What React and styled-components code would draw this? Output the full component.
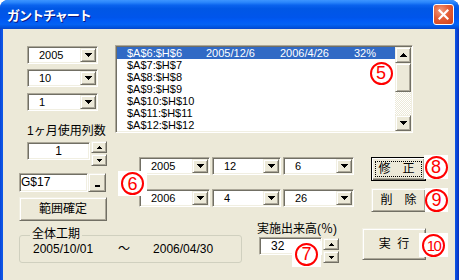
import styled, { createGlobalStyle, css } from "styled-components";

const FACE = "#ece9d8";
const CJK = `"Liberation Sans", "Noto Sans CJK JP", sans-serif`;

const GlobalStyle = createGlobalStyle`
  html, body {
    margin: 0;
    padding: 0;
    background: #ffffff;
  }
  body {
    font-family: ${CJK};
    font-size: 12px;
    color: #000000;
  }
  * {
    box-sizing: border-box;
  }
`;

const sunken = css`
  border: 1px solid;
  border-color: #aca899 #ffffff #ffffff #aca899;
  padding: 1px;
  box-shadow: inset 1px 1px #716f64, inset -1px -1px #f1efe2;
  background: #ffffff;
`;

const raised = css`
  border: 1px solid;
  border-color: #f1efe2 #716f64 #716f64 #f1efe2;
  box-shadow: inset 1px 1px #ffffff, inset -1px -1px #aca899;
  background: ${FACE};
`;

const Window = styled.div`
  position: relative;
  width: 459px;
  height: 280px;
  display: flex;
  flex-direction: column;
  background: linear-gradient(to right, #0a44d6, #0d56e6 2px, #0d56e6 455px, #0a44d6 457px, #0831b9);
  border-radius: 8px 8px 0 0;
  overflow: hidden;
`;

const TitleBar = styled.div`
  height: 29px;
  flex-shrink: 0;
  display: flex;
  align-items: center;
  justify-content: space-between;
  padding: 0 5px 0 7px;
  background: linear-gradient(
    to bottom,
    #3d95ff 0%,
    #2a86fb 8%,
    #0a63ee 18%,
    #0057e5 30%,
    #0055eb 60%,
    #005bf5 72%,
    #0462f4 84%,
    #0053de 94%,
    #0846c9 100%
  );
`;

const TitleText = styled.span`
  color: #ffffff;
  font-family: "Noto Sans CJK JP", sans-serif;
  font-weight: bold;
  font-size: 13px;
  letter-spacing: -1px;
  text-shadow: 1px 1px #0a1883;
`;

const CloseBtn = styled.div`
  width: 21px;
  height: 21px;
  border: 1px solid #ffffff;
  border-radius: 3px;
  background: radial-gradient(circle at 35% 30%, #f39b7c 0%, #e35d36 45%, #cf3f17 100%);
  display: flex;
  align-items: center;
  justify-content: center;
`;

const Client = styled.div`
  flex: 1;
  margin: 0 4px 0 3px;
  background: ${FACE};
  padding: 16px 0 0 16px;
  display: flex;
  flex-direction: column;
`;

const TopSection = styled.div`
  display: flex;
  align-items: flex-start;
  height: 176px;
`;

const LeftCol = styled.div`
  width: 88px;
  padding-top: 1px;
  display: flex;
  flex-direction: column;
  align-items: flex-start;
`;

const Combo = styled.div`
  ${sunken}
  width: ${(p) => p.$w}px;
  height: 18px;
  display: flex;
  margin-top: ${(p) => p.$mt || 0}px;
  margin-left: ${(p) => p.$ml || 0}px;
`;

const ComboValue = styled.span`
  flex: 1;
  padding-left: 10px;
  font-size: 11px;
  line-height: 14px;
`;

const DropBtn = styled.span`
  ${raised}
  width: 16px;
  display: flex;
  align-items: center;
  justify-content: center;
`;

const Label = styled.div`
  font-size: 12px;
  line-height: 14px;
  white-space: nowrap;
  margin-top: ${(p) => p.$mt || 0}px;
  margin-left: ${(p) => p.$ml || 0}px;
`;

const SpinRow = styled.div`
  display: flex;
  align-items: flex-start;
  margin-top: ${(p) => p.$mt || 0}px;
  margin-left: ${(p) => p.$ml || 0}px;
`;

const Edit = styled.div`
  ${sunken}
  width: ${(p) => p.$w}px;
  height: ${(p) => p.$h}px;
  margin-top: ${(p) => p.$mt || 0}px;
  padding-left: ${(p) => p.$pl || 1}px;
  font-size: 12px;
  line-height: ${(p) => p.$h - 4}px;
  text-align: ${(p) => p.$align || "left"};
`;

const SpinCol = styled.div`
  width: 16px;
  margin-left: 1px;
  display: flex;
  flex-direction: column;
  gap: 1px;
  margin-top: ${(p) => p.$mt || 0}px;
`;

const SpinBtn = styled.div`
  ${raised}
  height: 12px;
  display: flex;
  align-items: center;
  justify-content: center;
`;

const RefButton = styled.div`
  ${raised}
  width: 18px;
  height: 19px;
  display: flex;
  align-items: flex-end;
  justify-content: center;
  padding-bottom: 4px;
`;

const RefBar = styled.span`
  width: 5px;
  height: 2px;
  background: #000000;
`;

const PushButton = styled.div`
  ${raised}
  width: ${(p) => p.$w}px;
  height: ${(p) => p.$h}px;
  margin-top: ${(p) => p.$mt || 0}px;
  margin-left: ${(p) => p.$ml || 0}px;
  display: flex;
  align-items: center;
  justify-content: center;
  font-size: 12px;
  line-height: 14px;
  white-space: pre;
  flex-shrink: 0;
  ${(p) =>
    p.$default &&
    css`
      border-color: #000000;
      box-shadow: inset 1px 1px #ffffff, inset -1px -1px #716f64, inset -2px -2px #aca899;
      padding: 3px;
      align-items: stretch;
    `}
`;

const FocusRing = styled.span`
  flex: 1;
  border: 1px dotted #000000;
  display: flex;
  align-items: center;
  justify-content: center;
  padding-right: 4px;
`;

const RightArea = styled.div`
  margin-left: 8px;
  display: flex;
  flex-direction: column;
`;

const ListBox = styled.div`
  ${sunken}
  width: 298px;
  height: 88px;
  display: flex;
`;

const ListRows = styled.div`
  flex: 1;
  display: flex;
  flex-direction: column;
`;

const ListRow = styled.div`
  height: 12px;
  display: grid;
  grid-template-columns: 79px 74px 74px 1fr;
  padding-left: 10px;
  font-size: 11px;
  line-height: 12px;
  white-space: nowrap;
  background: ${(p) => (p.$selected ? "#316ac5" : "transparent")};
  color: ${(p) => (p.$selected ? "#ffffff" : "#000000")};
`;

const ScrollBar = styled.div`
  width: 16px;
  display: flex;
  flex-direction: column;
`;

const ScrollBtn = styled.div`
  ${raised}
  height: 16px;
  display: flex;
  align-items: center;
  justify-content: center;
`;

const Thumb = styled.div`
  ${raised}
  height: 29px;
`;

const Track = styled.div`
  flex: 1;
  background: repeating-conic-gradient(#ffffff 0 25%, ${FACE} 0 50%) 0 0 / 2px 2px;
`;

const ControlsRow = styled.div`
  display: flex;
  align-items: flex-start;
  margin-top: 24px;
`;

const DateGrid = styled.div`
  margin-left: 24px;
  display: grid;
  grid-template-columns: 71px 69px 71px;
  column-gap: 2px;
  row-gap: 14px;
`;

const ButtonCol = styled.div`
  margin-left: 17px;
  display: flex;
  flex-direction: column;
`;

const BottomSection = styled.div`
  display: flex;
  align-items: flex-start;
`;

const GroupBox = styled.div`
  position: relative;
  width: 223px;
  height: 28px;
  margin-top: 14px;
  border: 1px solid #d0d0bf;
  border-radius: 3px;
  display: flex;
  align-items: center;
  padding-left: 13px;
  font-size: 12px;
  line-height: 14px;
`;

const GroupLegend = styled.span`
  position: absolute;
  top: -9px;
  left: 10px;
  padding: 0 2px;
  background: ${FACE};
`;

const DateText = styled.span`
  margin-left: ${(p) => p.$ml || 0}px;
`;

const ProgressCol = styled.div`
  margin-left: 15px;
  margin-top: 1px;
  display: flex;
  flex-direction: column;
  align-items: flex-start;
`;

const Marker = styled.div`
  position: absolute;
  left: ${(p) => p.$x}px;
  top: ${(p) => p.$y}px;
  width: ${(p) => p.$w}px;
  height: ${(p) => p.$h}px;
  background: #ffffff;
  display: flex;
  align-items: center;
  justify-content: center;
`;

const Ring = styled.span`
  width: 23px;
  height: 23px;
  border: 2px solid #ff0000;
  border-radius: 50%;
  display: flex;
  align-items: center;
  justify-content: center;
  color: #ff0000;
  font-family: "Liberation Sans", sans-serif;
  font-size: ${(p) => (p.$narrow ? 15 : 18)}px;
  letter-spacing: ${(p) => (p.$narrow ? -1.5 : 0)}px;
  line-height: 1;
`;

const Triangle = ({ dir = "down", w = 7 }) => {
  const h = Math.ceil(w / 2);
  const pts = dir === "down" ? `0,0 ${w},0 ${w / 2},${h}` : `0,${h} ${w},${h} ${w / 2},0`;
  return (
    <svg width={w} height={h} viewBox={`0 0 ${w} ${h}`} shapeRendering="crispEdges">
      <polygon points={pts} fill="#000000" />
    </svg>
  );
};

const ComboBox = ({ value, w, mt, ml }) => (
  <Combo $w={w} $mt={mt} $ml={ml}>
    <ComboValue>{value}</ComboValue>
    <DropBtn>
      <Triangle dir="down" />
    </DropBtn>
  </Combo>
);

const Spinner = () => (
  <>
    <SpinBtn>
      <Triangle dir="up" w={5} />
    </SpinBtn>
    <SpinBtn>
      <Triangle dir="down" w={5} />
    </SpinBtn>
  </>
);

const rows = [
  ["$A$6:$H$6", "2005/12/6", "2006/4/26", "32%"],
  ["$A$7:$H$7"],
  ["$A$8:$H$8"],
  ["$A$9:$H$9"],
  ["$A$10:$H$10"],
  ["$A$11:$H$11"],
  ["$A$12:$H$12"],
];

const markers = [
  { n: "5", x: 369, y: 61, w: 24, h: 24 },
  { n: "6", x: 118, y: 171, w: 29, h: 25 },
  { n: "7", x: 292, y: 241, w: 29, h: 26 },
  { n: "8", x: 424, y: 155, w: 24, h: 24 },
  { n: "9", x: 425, y: 188, w: 23, h: 24 },
  { n: "10", x: 419, y: 233, w: 29, h: 24 },
];

export default function App() {
  return (
    <>
      <GlobalStyle />
      <Window>
        <TitleBar>
          <TitleText>ガントチャート</TitleText>
          <CloseBtn>
            <svg width="11" height="11" viewBox="0 0 11 11">
              <path d="M1.5 1.5 L9.5 9.5 M9.5 1.5 L1.5 9.5" stroke="#ffffff" strokeWidth="2.2" strokeLinecap="square" />
            </svg>
          </CloseBtn>
        </TitleBar>

        <Client>
          <TopSection>
            <LeftCol>
              <ComboBox value="2005" w={71} ml={8} />
              <ComboBox value="10" w={71} ml={8} mt={5} />
              <ComboBox value="1" w={71} ml={8} mt={6} />
              <Label $mt={13} $ml={8}>1ヶ月使用列数</Label>
              <SpinRow $mt={3} $ml={8}>
                <Edit $w={63} $h={18} $mt={1} $align="center">1</Edit>
                <SpinCol>
                  <Spinner />
                </SpinCol>
              </SpinRow>
              <SpinRow $mt={7}>
                <Edit $w={69} $h={19}>G$17</Edit>
                <RefButton>
                  <RefBar />
                </RefButton>
              </SpinRow>
              <PushButton $w={88} $h={24} $mt={5}>範囲確定</PushButton>
            </LeftCol>

            <RightArea>
              <ListBox>
                <ListRows>
                  {rows.map((r, i) => (
                    <ListRow key={i} $selected={i === 0}>
                      <span>{r[0]}</span>
                      <span>{r[1]}</span>
                      <span>{r[2]}</span>
                      <span>{r[3]}</span>
                    </ListRow>
                  ))}
                </ListRows>
                <ScrollBar>
                  <ScrollBtn>
                    <Triangle dir="up" />
                  </ScrollBtn>
                  <Thumb />
                  <Track />
                  <ScrollBtn>
                    <Triangle dir="down" />
                  </ScrollBtn>
                </ScrollBar>
              </ListBox>

              <ControlsRow>
                <DateGrid>
                  <ComboBox value="2005" w={71} />
                  <ComboBox value="12" w={69} />
                  <ComboBox value="6" w={71} />
                  <ComboBox value="2006" w={71} />
                  <ComboBox value="4" w={69} />
                  <ComboBox value="26" w={71} />
                </DateGrid>
                <ButtonCol>
                  <PushButton $w={55} $h={24} $default>
                    <FocusRing>修　正</FocusRing>
                  </PushButton>
                  <PushButton $w={55} $h={24} $mt={7}>
                    削　除
                  </PushButton>
                </ButtonCol>
              </ControlsRow>
            </RightArea>
          </TopSection>

          <BottomSection>
            <GroupBox>
              <GroupLegend>全体工期</GroupLegend>
              <DateText>2005/10/01</DateText>
              <DateText $ml={25}>～</DateText>
              <DateText $ml={23}>2006/04/30</DateText>
            </GroupBox>

            <ProgressCol>
              <Label>実施出来高(％)</Label>
              <SpinRow $mt={1} $ml={2}>
                <Edit $w={63} $h={18} $pl={11}>32</Edit>
                <SpinCol $mt={1}>
                  <Spinner />
                </SpinCol>
              </SpinRow>
            </ProgressCol>

            <PushButton $w={64} $h={32} $mt={7} $ml={23}>
              {"実  行"}
            </PushButton>
          </BottomSection>
        </Client>

        {markers.map((m) => (
          <Marker key={m.n} $x={m.x} $y={m.y} $w={m.w} $h={m.h}>
            <Ring $narrow={m.n.length > 1}>{m.n}</Ring>
          </Marker>
        ))}
      </Window>
    </>
  );
}
